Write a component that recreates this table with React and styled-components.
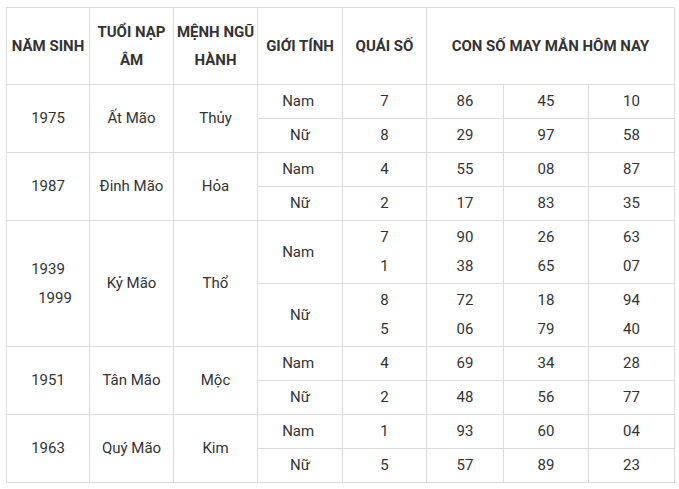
import React from "react";
import styled, { createGlobalStyle } from "styled-components";

const Global = createGlobalStyle`
  html, body { margin: 0; padding: 0; background: #fff; }
  body { font-family: Roboto, "Noto Sans", Arial, sans-serif; color: #333; }
  * { box-sizing: border-box; }
`;

const Page = styled.div`
  padding: 7px 0 0 6px;
`;

const Table = styled.div`
  display: grid;
  width: 669px;
  grid-template-columns: 83px 84px 84px 85px 84px 77px 85px 86px;
  grid-template-rows: ${(p) => p.$rows};
  border-left: 1px solid #dddddd;
  border-top: 1px solid #dddddd;
`;

const Cell = styled.div`
  grid-row: span ${(p) => p.$rowSpan || 1};
  grid-column: span ${(p) => p.$colSpan || 1};
  border-right: 1px solid #dddddd;
  border-bottom: 1px solid #dddddd;
  display: flex;
  flex-direction: column;
  align-items: center;
  justify-content: center;
  text-align: center;
  font-size: 15px;
  color: #333;
  line-height: 29px;
  white-space: pre;
`;

const HeadCell = styled(Cell)`
  font-weight: 700;
  line-height: 28px;
  color: #333;
`;

const Line = styled.span`
  display: block;
  padding-left: ${(p) => (p.$indent ? "14px" : "0")};
`;

const groups = [
  {
    years: ["1975"],
    tuoi: "Ất Mão",
    menh: "Thủy",
    rows: [
      { g: "Nam\u00a0", q: ["7"], n: [["86"], ["45"], ["10"]] },
      { g: "Nữ", q: ["8"], n: [["29"], ["97"], ["58"]] },
    ],
  },
  {
    years: ["1987"],
    tuoi: "Đinh Mão",
    menh: "Hỏa",
    rows: [
      { g: "Nam\u00a0", q: ["4"], n: [["55"], ["08"], ["87"]] },
      { g: "Nữ", q: ["2"], n: [["17"], ["83"], ["35"]] },
    ],
  },
  {
    years: ["1939", "1999"],
    tuoi: "Kỷ Mão",
    menh: "Thổ",
    rows: [
      { g: "Nam\u00a0", q: ["7", "1"], n: [["90", "38"], ["26", "65"], ["63", "07"]] },
      { g: "Nữ", q: ["8", "5"], n: [["72", "06"], ["18", "79"], ["94", "40"]] },
    ],
  },
  {
    years: ["1951"],
    tuoi: "Tân Mão",
    menh: "Mộc",
    rows: [
      { g: "Nam\u00a0", q: ["4"], n: [["69"], ["34"], ["28"]] },
      { g: "Nữ", q: ["2"], n: [["48"], ["56"], ["77"]] },
    ],
  },
  {
    years: ["1963"],
    tuoi: "Quý Mão",
    menh: "Kim",
    rows: [
      { g: "Nam\u00a0", q: ["1"], n: [["93"], ["60"], ["04"]] },
      { g: "Nữ", q: ["5"], n: [["57"], ["89"], ["23"]] },
    ],
  },
];

const Lines = ({ items }) =>
  items.map((t, i) => (
    <Line key={i} $indent={items.length > 1 && i > 0 && /^\d{4}$/.test(t)}>
      {t}
    </Line>
  ));

export default function App() {
  const rowHeights = ["77px"];
  groups.forEach((g) =>
    g.rows.forEach((r) => rowHeights.push(r.q.length > 1 ? "63px" : "34px"))
  );

  return (
    <Page>
      <Global />
      <Table $rows={rowHeights.join(" ")}>
        <HeadCell>NĂM SINH</HeadCell>
        <HeadCell>
          <Line>TUỔI NẠP</Line>
          <Line>ÂM</Line>
        </HeadCell>
        <HeadCell>
          <Line>MỆNH NGŨ</Line>
          <Line>HÀNH</Line>
        </HeadCell>
        <HeadCell>GIỚI TÍNH</HeadCell>
        <HeadCell>QUÁI SỐ</HeadCell>
        <HeadCell $colSpan={3}>CON SỐ MAY MẮN HÔM NAY</HeadCell>
        {groups.map((g, gi) => (
          <React.Fragment key={gi}>
            <Cell $rowSpan={2}>
              <Lines items={g.years} />
            </Cell>
            <Cell $rowSpan={2}>{g.tuoi}</Cell>
            <Cell $rowSpan={2}>{g.menh}</Cell>
            {g.rows.map((r, ri) => (
              <React.Fragment key={ri}>
                <Cell>{r.g}</Cell>
                <Cell>
                  <Lines items={r.q} />
                </Cell>
                {r.n.map((col, ci) => (
                  <Cell key={ci}>
                    <Lines items={col} />
                  </Cell>
                ))}
              </React.Fragment>
            ))}
          </React.Fragment>
        ))}
      </Table>
    </Page>
  );
}
